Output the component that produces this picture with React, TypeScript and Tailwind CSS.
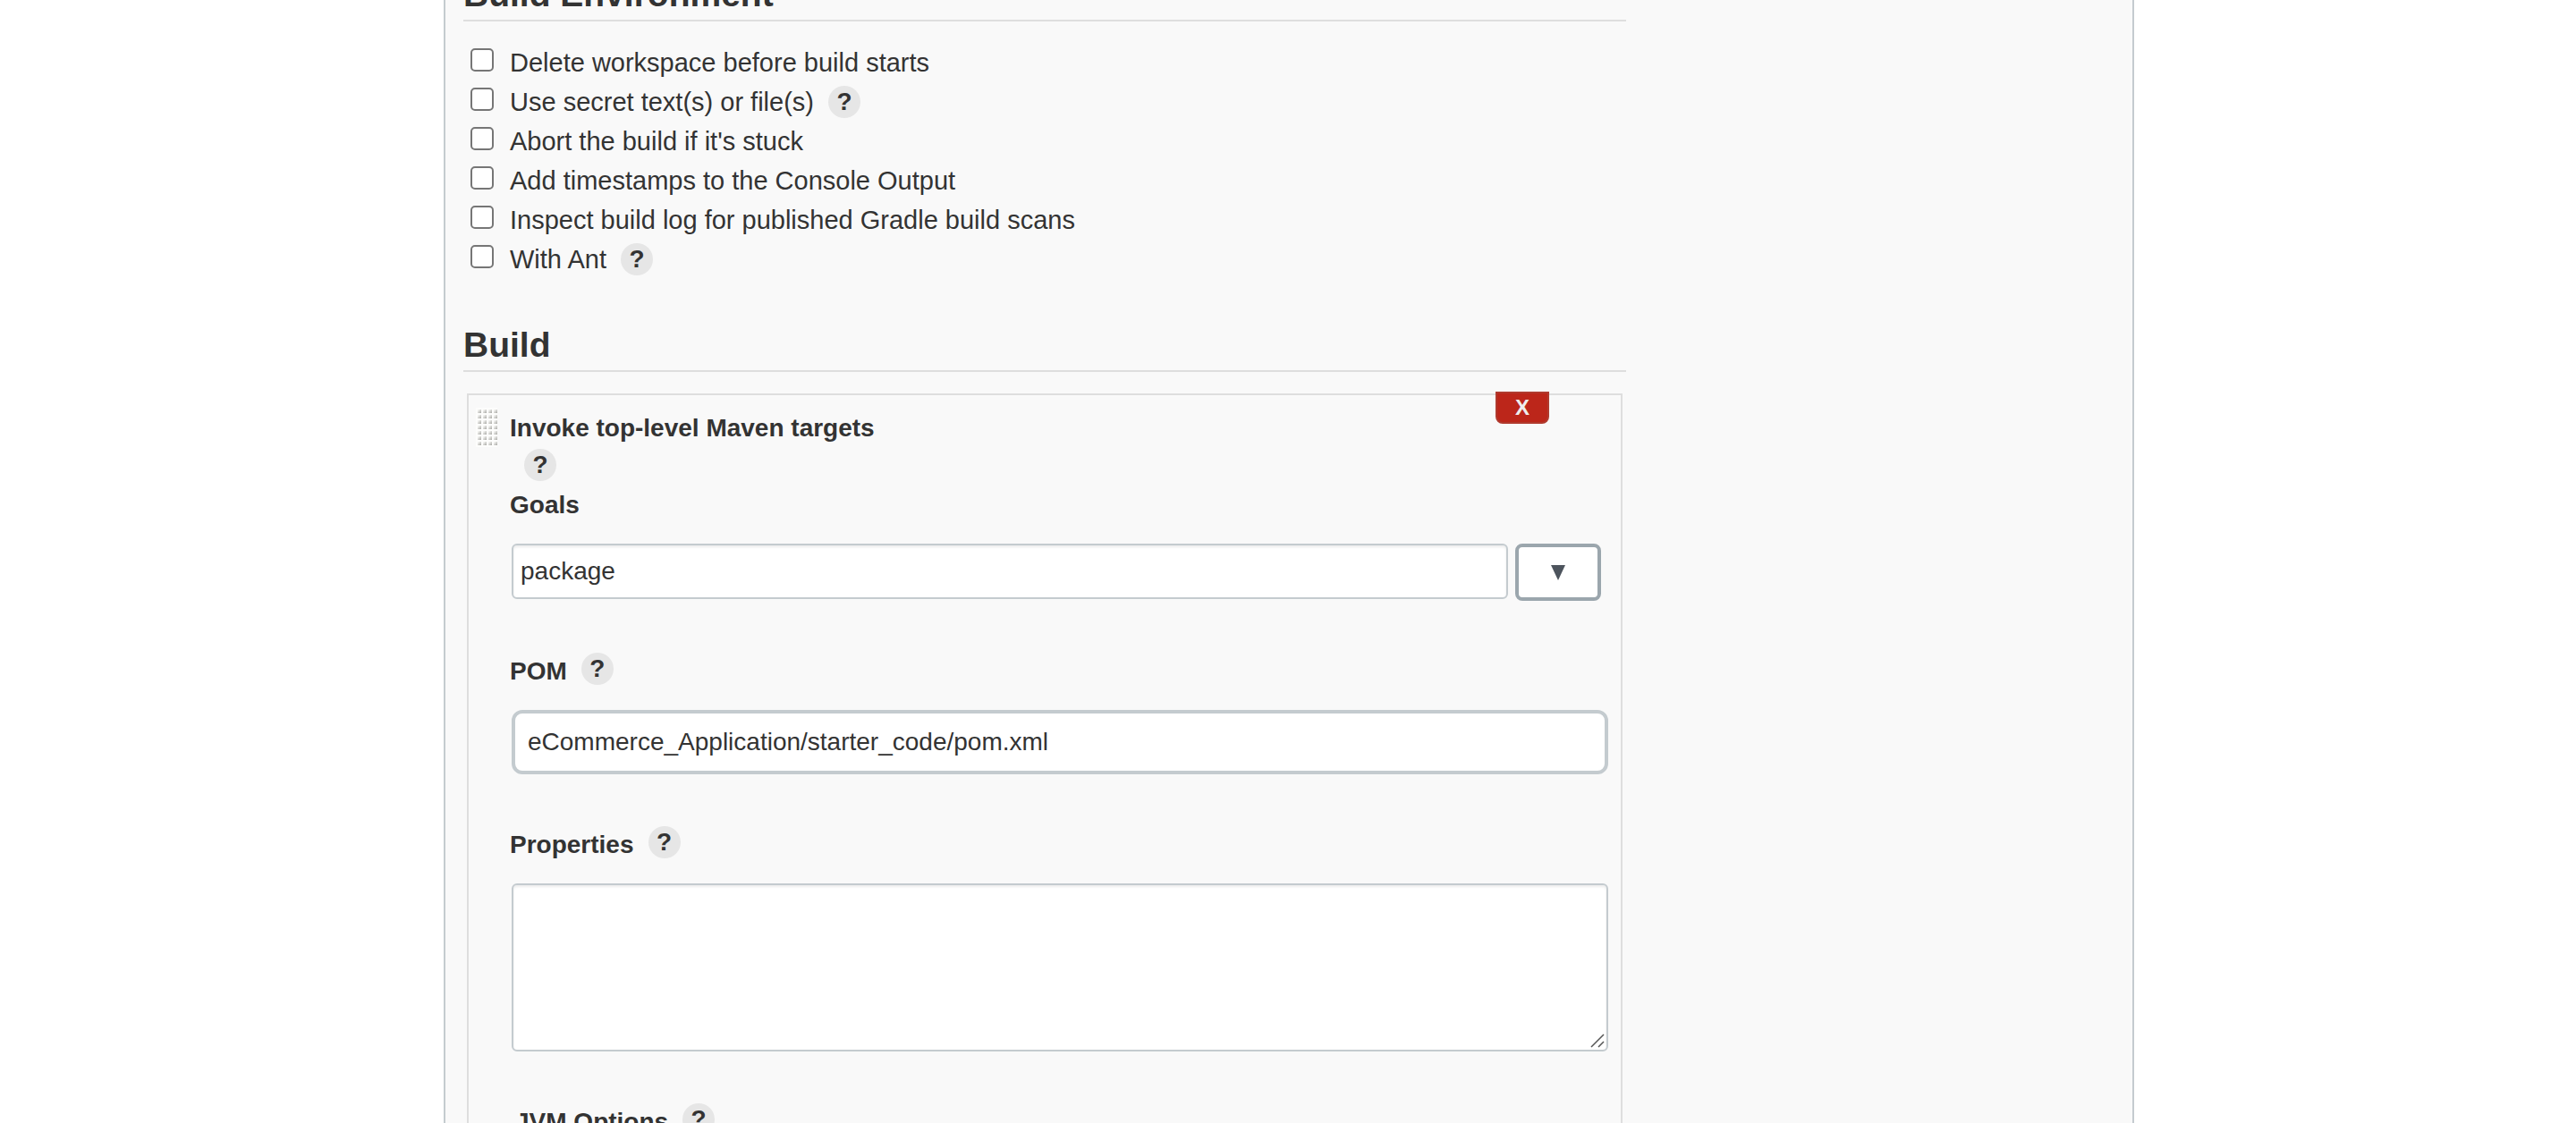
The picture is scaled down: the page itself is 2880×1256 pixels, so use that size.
import { useState } from "react";
import type { ReactNode } from "react";

function Help({ topic }: { topic: string }) {
  return (
    <button
      type="button"
      aria-label={`Help for ${topic}`}
      className="flex size-9 shrink-0 items-center justify-center rounded-full bg-[#e6e6e6] text-[28px] leading-9 font-bold"
    >
      ?
    </button>
  );
}

function SectionTitle({ children }: { children: ReactNode }) {
  return (
    <h2 className="border-b-2 border-[#dedede] pb-1 text-[39px] leading-[48px] font-bold">
      {children}
    </h2>
  );
}

const environmentOptions = [
  { id: "delete-workspace", label: "Delete workspace before build starts", help: false },
  { id: "use-secrets", label: "Use secret text(s) or file(s)", help: true },
  { id: "abort-stuck", label: "Abort the build if it's stuck", help: false },
  { id: "timestamps", label: "Add timestamps to the Console Output", help: false },
  { id: "gradle-scans", label: "Inspect build log for published Gradle build scans", help: false },
  { id: "with-ant", label: "With Ant", help: true },
];

function CheckRow({ id, label, help }: { id: string; label: string; help: boolean }) {
  return (
    <div className="flex h-11 items-center pl-2">
      <input
        id={id}
        type="checkbox"
        className="mr-[18px] mb-1.5 size-[26px] shrink-0 appearance-none rounded-[5px] border-2 border-[#767676] bg-white checked:bg-[#0075ff]"
      />
      <label htmlFor={id} className="mr-4 text-[29px] leading-[44px]">
        {label}
      </label>
      {help && <Help topic={label} />}
    </div>
  );
}

function FieldLabel({ id, label, help = true }: { id: string; label: string; help?: boolean }) {
  return (
    <div className="flex items-start gap-4">
      <label htmlFor={id} className="leading-[46px] font-bold">
        {label}
      </label>
      {help && (
        <div className="pt-0.5">
          <Help topic={label} />
        </div>
      )}
    </div>
  );
}

function DragHandle() {
  return (
    <svg viewBox="0 0 24 44" className="h-11 w-6" aria-hidden="true">
      <defs>
        <linearGradient id="dot" x1="0" y1="0" x2="1" y2="1">
          <stop offset="0.2" stopColor="#f2f2f0" />
          <stop offset="1" stopColor="#a6a6a2" />
        </linearGradient>
        <pattern id="grip" width="6" height="6" patternUnits="userSpaceOnUse">
          <rect width="6" height="6" fill="#fdfdfc" />
          <rect x="2" y="2" width="4" height="4" fill="url(#dot)" />
        </pattern>
      </defs>
      <rect width="24" height="44" fill="url(#grip)" />
    </svg>
  );
}

export default function App() {
  const [goals, setGoals] = useState("package");
  const [pom, setPom] = useState("eCommerce_Application/starter_code/pom.xml");

  return (
    <div className="grid h-screen grid-cols-[496fr_1890fr_494fr] overflow-hidden bg-white font-['Liberation_Sans',Arial,sans-serif] text-[28px] text-[#333]">
      <main className="col-start-2 grid grid-cols-[1300fr_566fr] border-x-2 border-[#c4cbcf] bg-[#f9f9f9] pl-5">
        <form className="-mt-[30px] min-w-0">
          <SectionTitle>Build Environment</SectionTitle>
          <div className="mt-6">
            {environmentOptions.map((option) => (
              <CheckRow key={option.id} {...option} />
            ))}
          </div>

          <div className="mt-[50px]">
            <SectionTitle>Build</SectionTitle>
          </div>
          <section className="relative mx-1 mt-6 flex border-2 border-[#dedede] pt-3.5 pr-3.5 pb-14 pl-2">
            <button
              type="button"
              aria-label="Delete build step"
              className="absolute -top-1 right-20 flex h-9 w-15 items-center justify-center rounded-b-lg border-2 border-[#b03a2e] bg-[#bc261a] text-2xl font-bold text-[#eee]"
            >
              X
            </button>
            <div className="w-[38px] shrink-0">
              <DragHandle />
            </div>
            <div className="min-w-0 grow">
              <h3 className="leading-[46px] font-bold">Invoke top-level Maven targets</h3>
              <div className="mb-1 pl-4">
                <Help topic="Invoke top-level Maven targets" />
              </div>

              <FieldLabel id="goals" label="Goals" help={false} />
              <div className="mt-5 flex items-start gap-2 pr-2 pl-0.5">
                <input
                  id="goals"
                  type="text"
                  value={goals}
                  onChange={(e) => setGoals(e.target.value)}
                  className="h-[62px] min-w-0 grow rounded-md border-2 border-[#c4cbcf] bg-white px-2 shadow-[inset_0_2px_3px_rgba(0,0,0,0.08)]"
                />
                <button
                  type="button"
                  aria-label="Expand goals"
                  className="flex h-16 w-24 shrink-0 items-center justify-center rounded-lg border-4 border-[#9ba6ad] bg-white"
                >
                  <svg viewBox="0 0 16 17" className="h-[17px] w-4" aria-hidden="true">
                    <path d="M0 0H16L8 17Z" fill="#4d545d" />
                  </svg>
                </button>
              </div>

              <div className="mt-14">
                <FieldLabel id="pom" label="POM" />
              </div>
              <div className="mt-5 pl-0.5">
                <input
                  id="pom"
                  type="text"
                  value={pom}
                  onChange={(e) => setPom(e.target.value)}
                  className="block h-[72px] w-full rounded-xl border-4 border-[#c4cbcf] bg-white px-3.5"
                />
              </div>

              <div className="mt-14">
                <FieldLabel id="properties" label="Properties" />
              </div>
              <div className="relative mt-5 pl-0.5">
                <textarea
                  id="properties"
                  className="block h-[188px] w-full resize-none rounded-md border-2 border-[#c4cbcf] bg-white px-2 py-2 shadow-[inset_0_2px_3px_rgba(0,0,0,0.08)]"
                />
                <svg
                  viewBox="0 0 16 16"
                  className="pointer-events-none absolute right-1 bottom-1 size-4"
                  aria-hidden="true"
                >
                  <path d="M1 15L15 1M9 15L15 9" fill="none" stroke="#555" strokeWidth="1.5" />
                </svg>
              </div>

              <div className="mt-14 pl-1.5">
                <FieldLabel id="jvm-options" label="JVM Options" />
              </div>
              <div className="mt-5 pl-0.5">
                <input
                  id="jvm-options"
                  type="text"
                  className="block h-[62px] w-full rounded-md border-2 border-[#c4cbcf] bg-white px-2"
                />
              </div>
            </div>
          </section>
        </form>
      </main>
    </div>
  );
}
